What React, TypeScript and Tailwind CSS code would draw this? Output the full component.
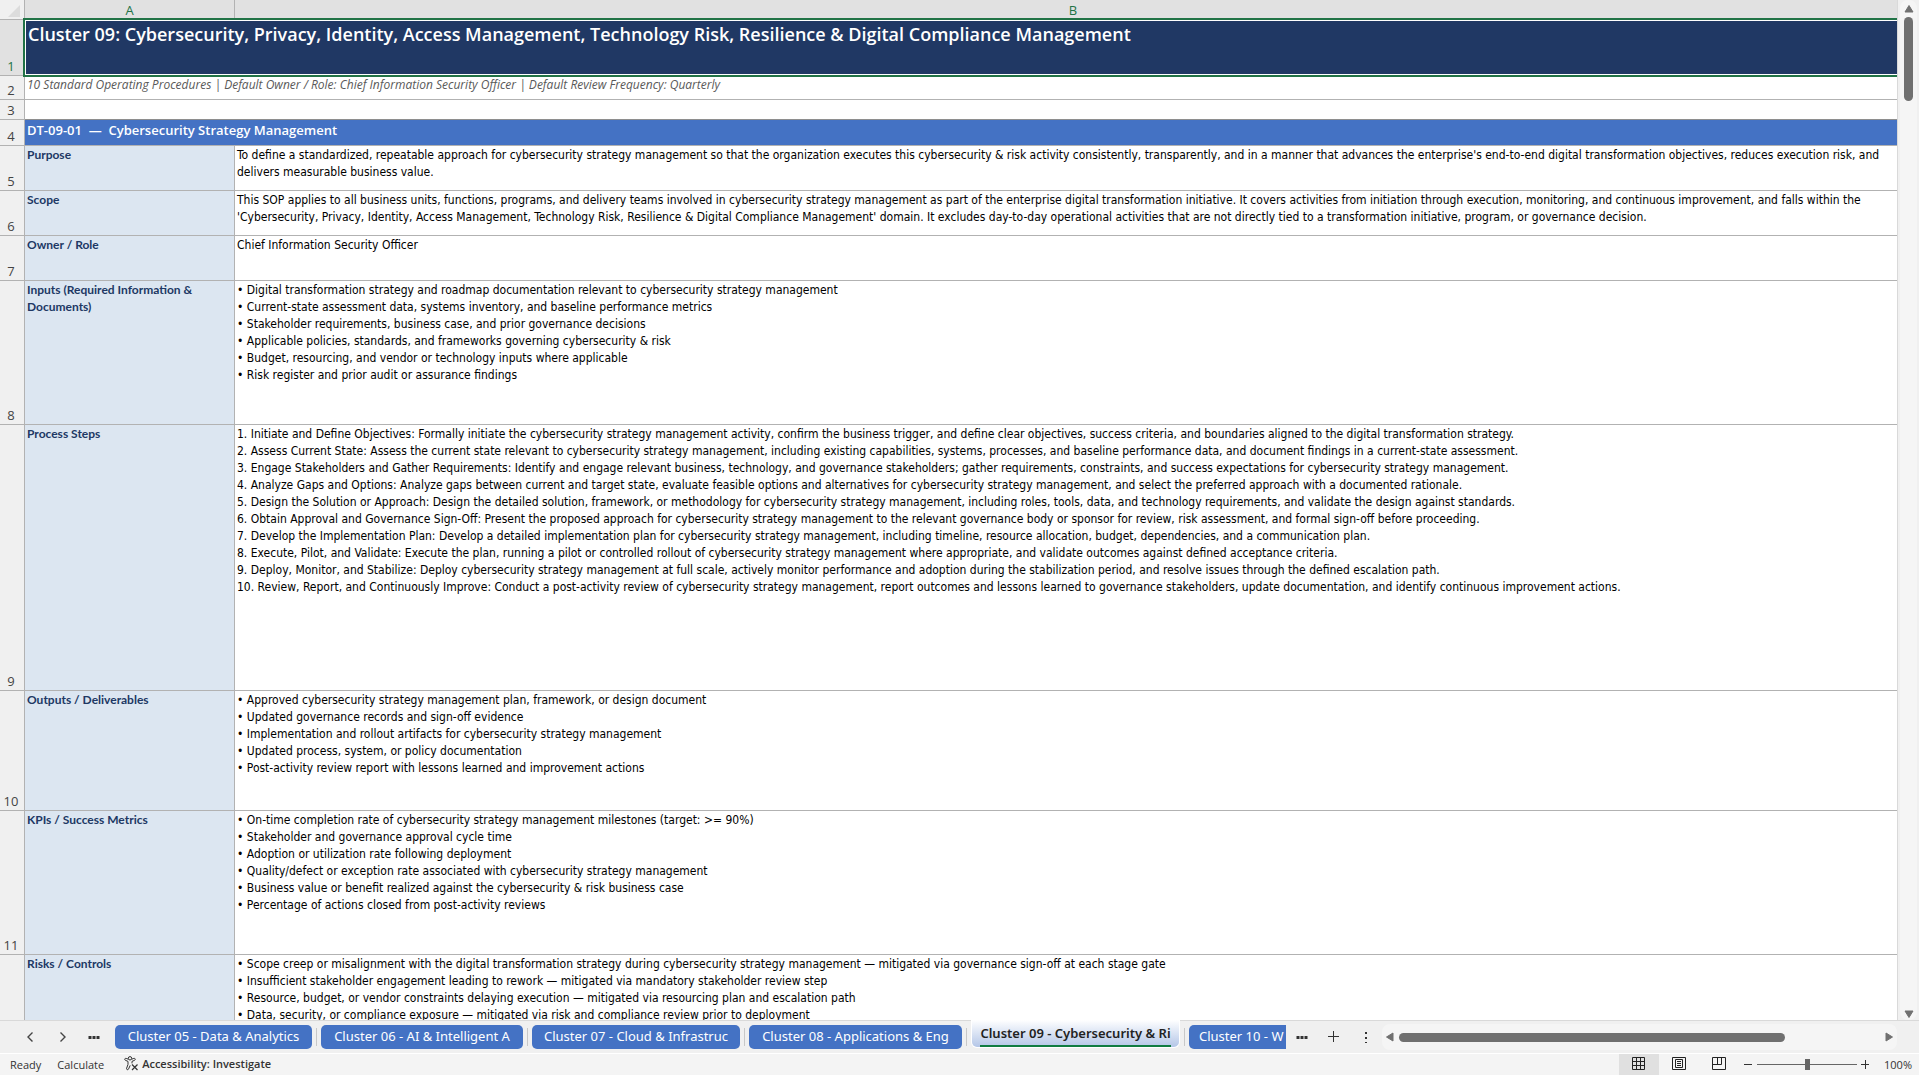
import * as React from "react";

import { clsx } from "clsx";

interface ISheetRow {
  id: number;
  height: string;
  label: string;
  lines: string[];
}

interface ISheetTab {
  name: string;
  width: string;
  isActive?: boolean;
}

const rows: ISheetRow[] = [
  {
    id: 5,
    height: "h-[45px]",
    label: "Purpose",
    lines: [
      "To define a standardized, repeatable approach for cybersecurity strategy management so that the organization executes this cybersecurity & risk activity consistently, transparently, and in a manner that advances the enterprise's end-to-end digital transformation objectives, reduces execution risk, and",
      "delivers measurable business value.",
    ],
  },
  {
    id: 6,
    height: "h-[45px]",
    label: "Scope",
    lines: [
      "This SOP applies to all business units, functions, programs, and delivery teams involved in cybersecurity strategy management as part of the enterprise digital transformation initiative. It covers activities from initiation through execution, monitoring, and continuous improvement, and falls within the",
      "'Cybersecurity, Privacy, Identity, Access Management, Technology Risk, Resilience & Digital Compliance Management' domain. It excludes day-to-day operational activities that are not directly tied to a transformation initiative, program, or governance decision.",
    ],
  },
  {
    id: 7,
    height: "h-[45px]",
    label: "Owner / Role",
    lines: ["Chief Information Security Officer"],
  },
  {
    id: 8,
    height: "h-36",
    label: "Inputs (Required Information & Documents)",
    lines: [
      "• Digital transformation strategy and roadmap documentation relevant to cybersecurity strategy management",
      "• Current-state assessment data, systems inventory, and baseline performance metrics",
      "• Stakeholder requirements, business case, and prior governance decisions",
      "• Applicable policies, standards, and frameworks governing cybersecurity & risk",
      "• Budget, resourcing, and vendor or technology inputs where applicable",
      "• Risk register and prior audit or assurance findings",
    ],
  },
  {
    id: 9,
    height: "h-[266px]",
    label: "Process Steps",
    lines: [
      "1. Initiate and Define Objectives: Formally initiate the cybersecurity strategy management activity, confirm the business trigger, and define clear objectives, success criteria, and boundaries aligned to the digital transformation strategy.",
      "2. Assess Current State: Assess the current state relevant to cybersecurity strategy management, including existing capabilities, systems, processes, and baseline performance data, and document findings in a current-state assessment.",
      "3. Engage Stakeholders and Gather Requirements: Identify and engage relevant business, technology, and governance stakeholders; gather requirements, constraints, and success expectations for cybersecurity strategy management.",
      "4. Analyze Gaps and Options: Analyze gaps between current and target state, evaluate feasible options and alternatives for cybersecurity strategy management, and select the preferred approach with a documented rationale.",
      "5. Design the Solution or Approach: Design the detailed solution, framework, or methodology for cybersecurity strategy management, including roles, tools, data, and technology requirements, and validate the design against standards.",
      "6. Obtain Approval and Governance Sign-Off: Present the proposed approach for cybersecurity strategy management to the relevant governance body or sponsor for review, risk assessment, and formal sign-off before proceeding.",
      "7. Develop the Implementation Plan: Develop a detailed implementation plan for cybersecurity strategy management, including timeline, resource allocation, budget, dependencies, and a communication plan.",
      "8. Execute, Pilot, and Validate: Execute the plan, running a pilot or controlled rollout of cybersecurity strategy management where appropriate, and validate outcomes against defined acceptance criteria.",
      "9. Deploy, Monitor, and Stabilize: Deploy cybersecurity strategy management at full scale, actively monitor performance and adoption during the stabilization period, and resolve issues through the defined escalation path.",
      "10. Review, Report, and Continuously Improve: Conduct a post-activity review of cybersecurity strategy management, report outcomes and lessons learned to governance stakeholders, update documentation, and identify continuous improvement actions.",
    ],
  },
  {
    id: 10,
    height: "h-[120px]",
    label: "Outputs / Deliverables",
    lines: [
      "• Approved cybersecurity strategy management plan, framework, or design document",
      "• Updated governance records and sign-off evidence",
      "• Implementation and rollout artifacts for cybersecurity strategy management",
      "• Updated process, system, or policy documentation",
      "• Post-activity review report with lessons learned and improvement actions",
    ],
  },
  {
    id: 11,
    height: "h-36",
    label: "KPIs / Success Metrics",
    lines: [
      "• On-time completion rate of cybersecurity strategy management milestones (target: >= 90%)",
      "• Stakeholder and governance approval cycle time",
      "• Adoption or utilization rate following deployment",
      "• Quality/defect or exception rate associated with cybersecurity strategy management",
      "• Business value or benefit realized against the cybersecurity & risk business case",
      "• Percentage of actions closed from post-activity reviews",
    ],
  },
  {
    id: 12,
    height: "h-36",
    label: "Risks / Controls",
    lines: [
      "• Scope creep or misalignment with the digital transformation strategy during cybersecurity strategy management — mitigated via governance sign-off at each stage gate",
      "• Insufficient stakeholder engagement leading to rework — mitigated via mandatory stakeholder review step",
      "• Resource, budget, or vendor constraints delaying execution — mitigated via resourcing plan and escalation path",
      "• Data, security, or compliance exposure — mitigated via risk and compliance review prior to deployment",
    ],
  },
];

const tabs: ISheetTab[] = [
  { name: "Cluster 05 - Data & Analytics", width: "w-[197px]" },
  { name: "Cluster 06 - AI & Intelligent A", width: "w-[202px]" },
  { name: "Cluster 07 - Cloud & Infrastruc", width: "w-[208px]" },
  { name: "Cluster 08 - Applications & Eng", width: "w-[213px]" },
  { name: "Cluster 09 - Cybersecurity & Ri", width: "w-[209px]", isActive: true },
];

const RowHeader = ({ id, isSelected }: { id: number; isSelected?: boolean }) => (
  <th
    scope="row"
    className={clsx(
      "border-r border-b border-[#b2b2b2] p-0 pr-0.5 pb-px text-center align-bottom text-[13px] leading-4 font-normal",
      isSelected ? "bg-[#e1e1e1] text-[#217346]" : "bg-[#f0f0f0] text-[#444]"
    )}
  >
    {id}
  </th>
);

const Sheet = () => (
  <table className="w-full table-fixed border-separate border-spacing-0 bg-white">
    <colgroup>
      <col className="w-[25px]" />
      <col className="w-[210px]" />
      <col />
    </colgroup>
    <thead>
      <tr className="h-5 text-[13px] leading-4 text-[#217346]">
        <td className="border-r border-b border-[#b2b2b2] bg-[#f0f0f0] p-0 align-bottom">
          <button aria-label="Select all" className="flex w-full justify-end pr-1 pb-0.5">
            <svg width="12" height="12" viewBox="0 0 12 12">
              <path d="M12 0v12H0z" fill="#dcdcdc" />
            </svg>
          </button>
        </td>
        <th scope="col" className="border-r border-[#b2b2b2] bg-[#e1e1e1] p-0 font-normal">
          A
        </th>
        <th scope="col" className="bg-[#e1e1e1] p-0 pl-3.5 font-normal">
          B
        </th>
      </tr>
    </thead>
    <tbody>
      <tr className="h-14">
        <RowHeader id={1} isSelected />
        <td colSpan={2} className="relative bg-[#203864] p-0 px-[3px] pt-px align-top">
          <div className="text-[18px] leading-[26px] font-semibold whitespace-nowrap text-white">
            Cluster 09: Cybersecurity, Privacy, Identity, Access Management, Technology Risk, Resilience &
            Digital Compliance Management
          </div>
          {/* selection frame, runs off the right edge of the pane */}
          <div className="pointer-events-none absolute -top-0.5 right-0 -bottom-px -left-0.5 border-2 border-r-0 border-[#217346]">
            <div className="h-full border border-r-0 border-white" />
          </div>
        </td>
      </tr>
      <tr className="h-6">
        <RowHeader id={2} />
        <td
          colSpan={2}
          className="border-b border-[#b2b2b2] p-0 pl-0.5 align-top text-xs leading-[17px] text-[#595959] italic"
        >
          10 Standard Operating Procedures | Default Owner / Role: Chief Information Security Officer | Default
          Review Frequency: Quarterly
        </td>
      </tr>
      <tr className="h-5">
        <RowHeader id={3} />
        <td colSpan={2} className="border-b border-[#8e8e8e] p-0" />
      </tr>
      <tr className="h-[26px]">
        <RowHeader id={4} />
        <td
          colSpan={2}
          className="border-b border-[#b2b2b2] bg-[#4472c4] p-0 pt-px pl-0.5 align-top text-[13px] leading-[18px] font-semibold whitespace-pre text-white"
        >
          {"DT-09-01  —  Cybersecurity Strategy Management"}
        </td>
      </tr>
      {rows.map((row) => (
        <tr key={row.id} className={row.height}>
          <RowHeader id={row.id} />
          <td className="border-r border-b border-[#b2b2b2] bg-[#dce6f1] p-0 pl-0.5 align-top font-['Lato',sans-serif] text-xs leading-[17px] font-bold text-[#203864]">
            {row.label}
          </td>
          <td className="overflow-hidden border-b border-[#b2b2b2] p-0 pt-px pl-0.5 align-top font-['DejaVu_Sans_Condensed',sans-serif] text-xs leading-[17px] whitespace-nowrap text-black">
            {row.lines.map((line) => (
              <div key={line}>{line}</div>
            ))}
          </td>
        </tr>
      ))}
    </tbody>
  </table>
);

const VerticalScrollbar = () => (
  <div className="flex w-[22px] shrink-0 flex-col border-l border-[#d9d9d9] bg-[#f0f0f0] pr-0.5 pl-0.5">
    <div className="flex flex-1 flex-col items-center rounded-lg bg-[#f5f5f5] pt-[5px] pb-0.5">
      <button aria-label="Scroll up">
        <svg width="10" height="8" viewBox="0 0 10 8" className="block">
          <path d="M5 0.500L9 7H1z" fill="#707070" stroke="#707070" strokeLinejoin="round" />
        </svg>
      </button>
      <div className="mt-1 h-[84px] w-[9px] rounded-full bg-[#707070]" />
      <button aria-label="Scroll down" className="mt-auto">
        <svg width="10" height="8" viewBox="0 0 10 8" className="block">
          <path d="M5 7.500L9 1H1z" fill="#707070" stroke="#707070" strokeLinejoin="round" />
        </svg>
      </button>
    </div>
  </div>
);

const HorizontalScrollbar = () => (
  <div className="flex h-[26px] flex-1 items-center rounded-lg bg-[#f5f5f5] px-1">
    <button aria-label="Scroll left">
      <svg width="8" height="10" viewBox="0 0 8 10" className="block">
        <path d="M0.500 5L7 1v8z" fill="#707070" stroke="#707070" strokeLinejoin="round" />
      </svg>
    </button>
    <div className="ml-[5px] h-[9px] w-[386px] rounded-full bg-[#707070]" />
    <button aria-label="Scroll right" className="ml-auto">
      <svg width="8" height="10" viewBox="0 0 8 10" className="block">
        <path d="M7.500 5L1 1v8z" fill="#707070" stroke="#707070" strokeLinejoin="round" />
      </svg>
    </button>
  </div>
);

const Dots = ({ isVertical }: { isVertical?: boolean }) => (
  <svg width="12" height="12" viewBox="0 0 12 12" className={clsx("block", isVertical && "rotate-90")}>
    <path
      d={isVertical ? "M1 5h2v2H1zM6 5h2v2H6zM11 5h1v2h-1z" : "M0.500 5h3v3h-3zM4.500 5h3v3h-3zM8.500 5h3v3h-3z"}
      fill="#333"
    />
  </svg>
);

const TabDivider = () => <span className="mx-1 h-[18px] w-px shrink-0 bg-[#c8c8c8]" />;

const SheetTabs = () => (
  <div className="flex h-8 shrink-0 bg-[#f0f0f0]">
    <div className="flex w-[115px] shrink-0 items-center pl-[26px]">
      <button aria-label="Previous sheet">
        <svg width="8" height="12" viewBox="0 0 8 12" fill="none" className="block">
          <path d="M6.500 1.500L2 6l4.500 4.500" stroke="#444" strokeWidth="1.400" />
        </svg>
      </button>
      <button aria-label="Next sheet" className="ml-[25px]">
        <svg width="8" height="12" viewBox="0 0 8 12" fill="none" className="block">
          <path d="M1.500 1.500L6 6l-4.500 4.500" stroke="#444" strokeWidth="1.400" />
        </svg>
      </button>
      <button aria-label="More sheets before" className="ml-[21px]">
        <Dots />
      </button>
    </div>
    <div
      role="tablist"
      className="-mt-px flex min-w-0 flex-1 items-center overflow-hidden font-['Noto_Sans',sans-serif] text-[13px] whitespace-nowrap"
    >
      {tabs.map((tab) => (
        <React.Fragment key={tab.name}>
          {tab.isActive ? (
            <button
              role="tab"
              aria-selected
              className={clsx(
                "flex h-7 shrink-0 justify-center self-start rounded-b-md border border-t-0 border-white bg-linear-to-b from-white to-[#b4c6e7] font-semibold text-[#222]",
                tab.width
              )}
            >
              <span className="mt-[3px] border-b-2 border-[#107c41] leading-5">{tab.name}</span>
            </button>
          ) : (
            <button
              role="tab"
              aria-selected={false}
              className={clsx("h-6 shrink-0 rounded-[5px] bg-[#4472c4] text-white", tab.width)}
            >
              {tab.name}
            </button>
          )}
          <TabDivider />
        </React.Fragment>
      ))}
      <button
        role="tab"
        aria-selected={false}
        className="h-6 w-[209px] shrink-0 rounded-[5px] bg-[#4472c4] pl-2.5 text-left text-white"
      >
        Cluster 10 - W
      </button>
    </div>
    <div className="flex w-[633px] shrink-0 items-center pr-[22px] pl-2.5">
      <button aria-label="More sheets after">
        <Dots />
      </button>
      <button aria-label="New sheet" className="ml-5">
        <svg width="12" height="12" viewBox="0 0 12 12" className="block">
          <path d="M5.500 0v11M0 5.500h11" stroke="#333" />
        </svg>
      </button>
      <button aria-label="Tab bar options" className="mr-2.5 ml-5">
        <Dots isVertical />
      </button>
      <HorizontalScrollbar />
    </div>
  </div>
);

const AccessibilityIcon = () => (
  <svg width="15" height="15" viewBox="0 0 15 15" fill="none" stroke="#333" className="block">
    <circle cx="6" cy="2.300" r="1.700" />
    <path d="M4.300 3.200L2.200 2.400a1 1 0 0 0-.8 1.900L4 5.400v3L2.600 12.300a1 1 0 0 0 1.900.8l1.700-3.700M7.700 3.200l2.100-.8a1 1 0 0 1 .8 1.900L8 5.400v2" />
    <path d="M8 8.500l5.500 5.500M13.500 8.500L8 14" strokeWidth="1.200" />
  </svg>
);

const viewIcons = [
  { name: "Normal view", path: "M.5.5h12v12H.5zM4.500.5v12M8.500.5v12M.5 4.500h12M.5 8.500h12" },
  { name: "Page layout view", path: "M.5.5h13v12H.5zM3.500 2.500h7v8h-7zM5 4.500h4M5 6.500h4M5 8.500h4" },
  { name: "Page break preview", path: "M.5.5h13v12H.5zM5.500.5v7M9.500.5v7M.5 7.500h9" },
];

const StatusBar = () => (
  <footer className="flex h-[22px] shrink-0 items-center border-t border-white bg-[#f4f4f4] text-[11px] leading-4 text-[#333]">
    <span className="ml-2.5">Ready</span>
    <span className="ml-4">Calculate</span>
    <button className="ml-5 flex items-center gap-[3px] pb-0.5 font-semibold">
      <AccessibilityIcon />
      Accessibility: Investigate
    </button>
    <div className="ml-auto flex h-full items-center">
      {viewIcons.map((icon, index) => (
        <button
          key={icon.name}
          aria-label={icon.name}
          className={clsx("flex h-full w-10 items-center justify-center pb-0.5", index === 0 && "bg-[#e0e0e0]")}
        >
          <svg width="14" height="13" viewBox="0 0 14 13" fill="none" stroke="#222" className="block">
            <path d={icon.path} />
          </svg>
        </button>
      ))}
      <button aria-label="Zoom out" className="ml-[5px]">
        <svg width="9" height="9" viewBox="0 0 9 9" className="block">
          <path d="M0 4.500h8" stroke="#333" />
        </svg>
      </button>
      <input
        type="range"
        aria-label="Zoom"
        min={10}
        max={190}
        defaultValue={100}
        className="mx-1 h-3 w-[100px] appearance-none bg-transparent [&::-webkit-slider-runnable-track]:h-px [&::-webkit-slider-runnable-track]:bg-[#666] [&::-webkit-slider-thumb]:-mt-[5px] [&::-webkit-slider-thumb]:h-[11px] [&::-webkit-slider-thumb]:w-[5px] [&::-webkit-slider-thumb]:appearance-none [&::-webkit-slider-thumb]:bg-[#666]"
      />
      <button aria-label="Zoom in">
        <svg width="9" height="9" viewBox="0 0 9 9" className="block">
          <path d="M0 4.500h8M4.500 0v9" stroke="#333" />
        </svg>
      </button>
      <span className="mr-[7px] ml-3.5">100%</span>
    </div>
  </footer>
);

export default function App() {
  return (
    <div className="flex h-screen flex-col overflow-hidden bg-[#f0f0f0] font-['Open_Sans',sans-serif]">
      <div className="flex min-h-0 flex-1 border-b border-[#d9d9d9]">
        <main className="min-w-0 flex-1 overflow-hidden">
          <Sheet />
        </main>
        <VerticalScrollbar />
      </div>
      <SheetTabs />
      <StatusBar />
    </div>
  );
}
